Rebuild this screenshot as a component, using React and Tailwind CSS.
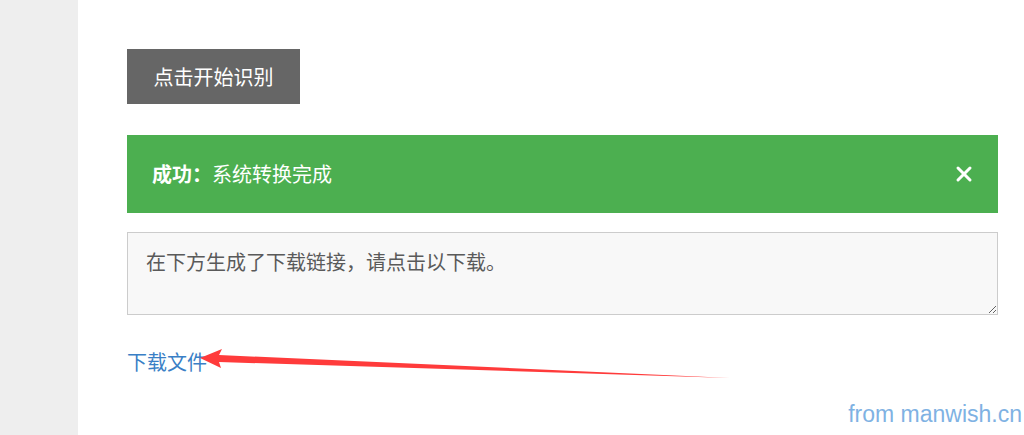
import {X} from 'lucide-react';

export default function App() {
    return (
        <div className="relative flex h-[435px] w-[1024px] overflow-hidden bg-white font-['Noto_Sans_CJK_SC','Microsoft_YaHei',sans-serif]">
            <aside className="w-[78px] shrink-0 bg-[#eeeeee]"/>
            <main className="flex-1 pl-[49px] pr-[26px] pt-[49px]">
                <button className="h-[55px] w-[173px] bg-[#666666] text-[20px] text-white">点击开始识别</button>

                <div className="mt-[31px] flex h-[78px] items-center justify-between bg-[#4caf50] pl-[25px] pr-[22px] text-[20px] text-white">
                    <p><span className="font-bold">成功：</span>系统转换完成</p>
                    <X size={24} strokeWidth={3}/>
                </div>

                <textarea
                    readOnly
                    value="在下方生成了下载链接，请点击以下载。"
                    className="mt-[19px] block h-[83px] w-full resize-y border border-[#cccccc] bg-[#f8f8f8] px-[18px] pt-[14px] text-[20px] text-[#5a5a5a] outline-none"
                />

                <a href="#" className="mt-[33px] inline-block text-[20px] leading-[28px] text-[#3a7fc6]">下载文件</a>
            </main>

            {/* annotation arrow drawn over the page */}
            <svg className="absolute left-0 top-0" width="1024" height="435">
                <polygon points="200,358 222,349 219,355 730,378 219,362 221,368" fill="#ff3b3b"/>
            </svg>

            <span className="absolute bottom-[4px] right-[2px] font-['Liberation_Sans',sans-serif] text-[23px] text-[#7fb2e3]">from manwish.cn</span>
        </div>
    )
}
